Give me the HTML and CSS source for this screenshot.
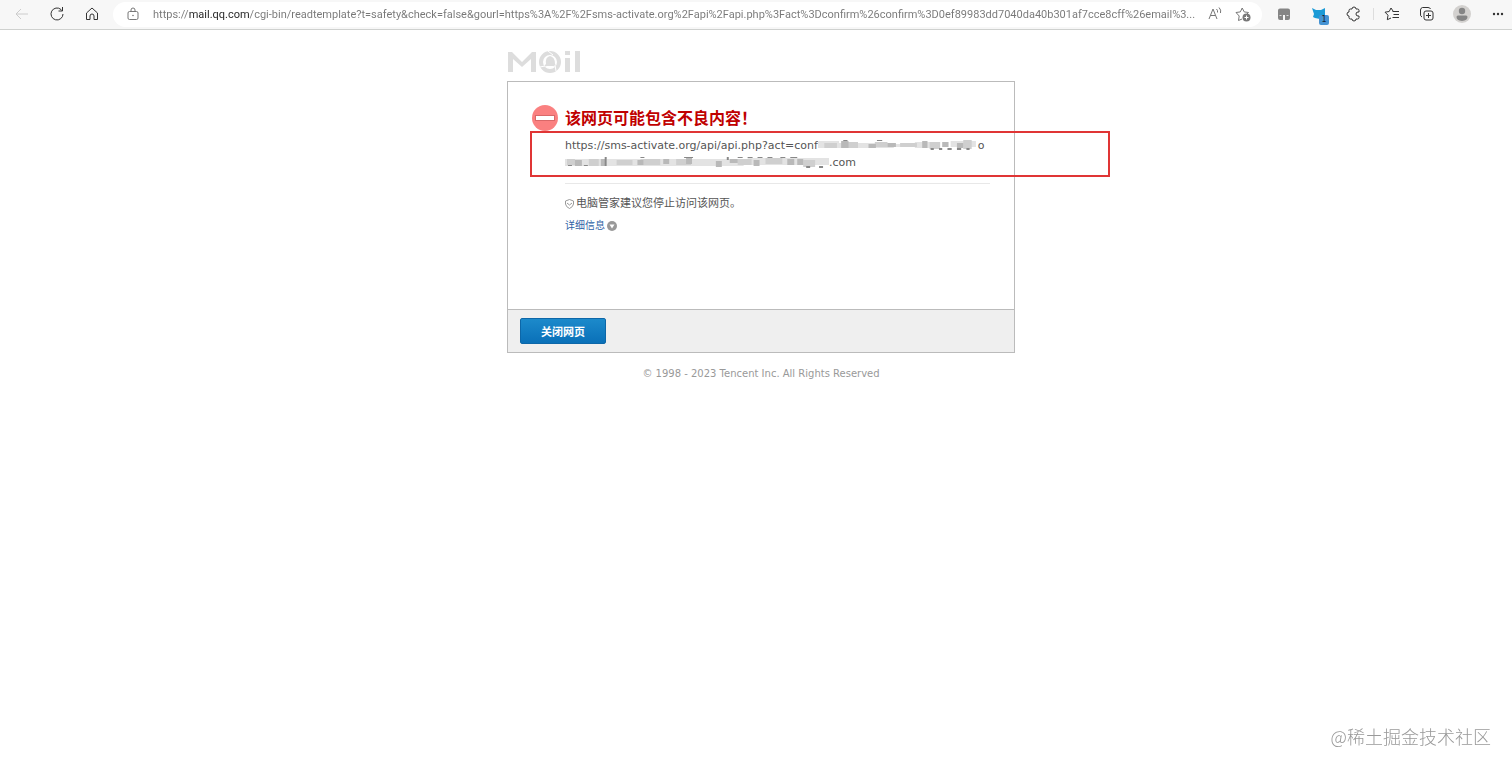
FILE: index.html
```html
<!DOCTYPE html>
<html lang="zh-CN">
<head>
    <meta charset="utf-8">
    <meta name="viewport" content="width=device-width, initial-scale=1.0">
    <title>QQ Mail</title>
    <link rel="stylesheet" href="styles.css">
</head>
<body>

    <header class="toolbar">
        <button class="tool back" aria-label="Back">
            <svg width="16" height="16" viewBox="0 0 16 16"><path d="M14 8H2M7 3L2 8l5 5"/></svg>
        </button>
        <button class="tool" aria-label="Refresh">
            <svg width="16" height="16" viewBox="0 0 16 16"><path d="M14 8a6 6 0 1 1-2-4.500L13.500 5M13.500 1v4h-4"/></svg>
        </button>
        <button class="tool" aria-label="Home">
            <svg width="16" height="16" viewBox="0 0 16 16"><path d="M2.500 7L8 2l5.500 5v6.500h-3.500V10a2 2 0 0 0-4 0v3.500H2.500z"/></svg>
        </button>

        <div class="address">
            <button class="addr-btn lock" aria-label="Site information">
                <svg width="14" height="14" viewBox="0 0 14 14"><rect x="2" y="4.500" width="10" height="8" rx="1.500"/><path d="M5 4.500V3a2 2 0 0 1 4 0v1.500"/><circle class="solid" cx="7" cy="8.500" r=".8"/></svg>
            </button>
            <input class="url" type="text" aria-label="Address" value="https://mail.qq.com/cgi-bin/readtemplate?t=safety&amp;check=false&amp;gourl=https%3A%2F%2Fsms-activate.org%2Fapi%2Fapi.php%3Fact%3Dconfirm%26confirm%3D0ef89983dd7040da40b301af7cce8cff%26email%3...">
            <button class="addr-btn" aria-label="Read aloud">
                <svg width="16" height="16" viewBox="0 0 16 16"><path d="M2 13L6 3l4 10M3.500 9.500h5M9.500 3q1.500 1.500 1 3.500M12 1.500q2.500 2.500 1.500 5.500"/></svg>
            </button>
            <button class="addr-btn" aria-label="Add to favorites">
                <svg width="16" height="16" viewBox="0 0 16 16"><path d="M7 13l-3.500 1.500.7-4.500L1 6.500l4.300-.6L7.200 2l2 3.900 4.300.6-1.500 1.500"/><circle class="solid" cx="11.500" cy="11.500" r="4"/><path class="white" d="M11.500 9.500v4M9.500 11.500h4"/></svg>
            </button>
        </div>

        <div class="extensions">
            <button class="tool" aria-label="Tampermonkey">
                <svg width="14" height="14" viewBox="0 0 14 14"><path class="fill-gray" d="M3 1.500h8q2 0 2 2V8H1V3.500q0-2 2-2zM1 8h5v5H3q-2 0-2-2zM8 8h5v3q0 2-2 2H8z"/><path class="pale" d="M2.500 8.500h2M9.500 8.500h2"/></svg>
            </button>
            <button class="tool blue-ext" aria-label="Extension, 1 item">
                <svg width="14" height="14" viewBox="0 0 14 14"><path class="fill-blue" d="M0 1l4 2h5l4-2v8l-2 1-3 2-5-1-2-1 1-3z"/></svg>
                <span class="badge">1</span>
            </button>
            <button class="tool" aria-label="Extensions">
                <svg width="16" height="16" viewBox="0 0 16 16"><path d="M4.500 3H6a2 2 0 0 1 4 0h1.500q1.500 0 1.500 1.500V6h-1a2 2 0 0 0 0 4h1v1.500q0 1.500-1.500 1.500H10a2 2 0 0 1-4 0H4.500Q3 13 3 11.500V10a2 2 0 0 1 0-4V4.500Q3 3 4.500 3z"/></svg>
            </button>
        </div>
        <div class="browser-menu">
            <button class="tool" aria-label="Favorites">
                <svg width="16" height="16" viewBox="0 0 16 16"><path d="M9 5L7 2 5.200 5.500 1 6.200l3 3-.7 4.500L7 12M8.500 5.500H15M9.500 8.500H15M8.500 11.500H15"/></svg>
            </button>
            <button class="tool" aria-label="Collections">
                <svg width="16" height="16" viewBox="0 0 16 16"><rect x="5" y="5" width="9" height="9" rx="2"/><path d="M9.500 7v5M7 9.500h5M3 11Q1 10 1.500 8V4q0-2 2-2.500H9q2 0 2.500 1.500"/></svg>
            </button>
            <button class="tool" aria-label="Profile">
                <svg width="18" height="18" viewBox="0 0 18 18"><circle class="avatar-bg" cx="9" cy="9" r="9"/><circle class="fill-gray" cx="9" cy="6" r="3.200"/><path class="fill-gray" d="M3.500 12q0-1.500 1.500-1.500h8q1.500 0 1.500 1.500 0 3.500-5.500 4-5.500-.5-5.500-4z"/></svg>
            </button>
            <button class="tool more" aria-label="Settings and more">
                <svg width="14" height="14" viewBox="0 0 14 14"><circle class="dot" cx="3" cy="7" r="1.200"/><circle class="dot" cx="7" cy="7" r="1.200"/><circle class="dot" cx="11" cy="7" r="1.200"/></svg>
            </button>
        </div>
    </header>

    <main class="page">
        <svg class="logo" width="74" height="24" viewBox="0 0 74 24" role="img" aria-label="Mail">
            <path class="logo-fill" d="M1 22V2h4l10 10L25 2h4v20h-5V9l-9 8-9-8v13z"/>
            <circle class="logo-ring" cx="43" cy="12" r="9"/>
            <path class="logo-fill" d="M39 14q-1-7 4-8 5 1 5 8l2 3-4-1h-6l-4 1z"/>
            <path class="logo-cut" d="M33 17l5-1M41 1l5 4M48 15l1 6"/>
            <path class="logo-fill" d="M58 8h5v14h-5zM58 1h5v4h-5zM68 1h5v21h-5z"/>
        </svg>

        <section class="card">
            <div class="content">
                <svg class="stop" width="26" height="26" viewBox="0 0 26 26"><circle class="stop-bg" cx="13" cy="13" r="13"/><rect class="stop-bar" x="3.500" y="10.500" width="19" height="5"/></svg>
                <div class="detail">
                    <h1>该网页可能包含不良内容！</h1>
                    <div class="target">
                        <p>https://sms-activate.org/api/api.php?act=conf<svg class="mosaic" width="160" height="12" viewBox="0 0 152 12" preserveAspectRatio="none">
                            <path class="m1" d="M0 2h20v7H0zM20 4h52v5H20zM72 5h20v3H72zM92 3h24v6H92zM126 2h24v6h-24z"/>
                            <path class="m2" d="M6 4h12v5H6zM28 3h10v6H28zM54 3h12v5H54zM78 4h16v4H78zM106 3h10v7h-10zM138 1h8v9h-8z"/>
                            <path class="m3" d="M22 2h7v7h-7zM48 5h7v4h-7zM66 4h8v4h-8zM99 2h5v7h-5zM118 3h6v5h-6zM132 4h6v5h-6z"/>
                            <path class="m4" d="M24 1h4v1h-4zM56 1h5v1h-5zM107 9h3v2h-3zM115 9h3v2h-3zM123 9h4v2h-4zM132 9h4v2h-4zM141 9h3v2h-3z"/>
                        </svg>o</p>
                        <p><svg class="mosaic" width="264" height="12" viewBox="0 0 266 12" preserveAspectRatio="none">
                            <path class="m1" d="M0 3h36v7H0zM42 3h104v7H42zM146 3h34v7h-34zM184 2h82v7h-82z"/>
                            <path class="m2" d="M2 3h8v6H2zM24 3h10v7H24zM52 4h16v5H52zM76 3h20v6H76zM112 3h15v6h-15zM174 3h14v6h-14zM202 2h17v6h-17zM240 4h12v7h-12z"/>
                            <path class="m3" d="M10 4h7v6h-7zM36 3h5v7h-5zM73 4h6v5h-6zM99 3h6v5h-6zM122 2h6v6h-6zM152 5h6v6h-6zM166 3h8v4h-8zM190 4h6v6h-6zM224 3h7v6h-7zM234 3h6v6h-6z"/>
                            <path class="m4" d="M3 9h4v1H3zM19 9h4v1h-4zM40 1h2v9h-2zM76 1h4v1h-4zM120 1h9v1h-9zM163 1h2v3h-2zM174 1h5v1h-5zM184 1h5v1h-5zM194 1h5v1h-5zM204 1h5v1h-5zM217 1h5v1h-5zM227 1h7v1h-7zM243 10h4v2h-4zM256 10h4v2h-4z"/>
                        </svg>.com</p>
                        <div class="highlight"></div>
                    </div>
                    <p class="advice">
                        <svg width="9" height="10" viewBox="0 0 9 10"><path d="M.5 2l4-1.500 4 1.500v3q-.5 3-4 4.500Q1 8 .5 5zM2 4l2.500 2L7 4"/></svg>
                        <span>电脑管家建议您停止访问该网页。</span>
                    </p>
                    <a class="info" href="#">详细信息
                        <svg width="10" height="10" viewBox="0 0 10 10"><circle class="info-bg" cx="5" cy="5" r="5"/><path class="info-arrow" d="M2.500 3.500h5L5 7.500z"/></svg>
                    </a>
                </div>
            </div>
            <div class="actions">
                <button class="close">关闭网页</button>
            </div>
        </section>

        <footer>© 1998 - 2023 Tencent Inc. All Rights Reserved</footer>
    </main>

    <div class="watermark">@稀土掘金技术社区</div>

</body>
</html>
```
FILE: styles.css
```css
* {
    box-sizing: border-box;
}

body {
    margin: 0;
    background: #fff;
    color: #555;
    font-family: "DejaVu Sans", "Noto Sans CJK SC", sans-serif;
    font-size: 11px;
}

h1, p {
    margin: 0;
}

button {
    padding: 0;
    border: 0;
    background: none;
    font-family: inherit;
    cursor: pointer;
}

svg {
    fill: none;
    stroke: currentColor;
}

/* browser bar */
.toolbar {
    display: flex;
    align-items: center;
    height: 30px;
    padding: 0 1px 1px 4px;
    background: #f7f7f7;
    border-bottom: 1px solid #cfd1cf;
    color: #333;
}

.tool {
    display: flex;
    align-items: center;
    justify-content: center;
    width: 35px;
    height: 28px;
    color: #333;
}

.back {
    color: #ccc;
}

.address {
    display: flex;
    flex: 1;
    align-items: center;
    min-width: 0;
    height: 25px;
    margin: 0 4px;
    padding: 0 5px 0 12px;
    background: #fff;
    border-radius: 13px;
}

.addr-btn {
    display: flex;
    align-items: center;
    justify-content: center;
    width: 28px;
    height: 24px;
    color: #777;
}

.addr-btn.lock {
    width: 16px;
    margin-right: 12px;
}

/* the host part of the address is darker than the rest */
.url {
    flex: 1;
    min-width: 0;
    height: 24px;
    padding: 0;
    border: 0;
    outline: 0;
    background: linear-gradient(to right, #777 36px, #222 36px, #222 96px, #777 96px);
    -webkit-background-clip: text;
    background-clip: text;
    color: transparent;
    font-family: Roboto, sans-serif;
    font-size: 11px;
}

.solid {
    fill: currentColor;
    stroke: none;
}

.white {
    stroke: #fff;
}

.fill-gray {
    fill: #858585;
    stroke: none;
}

.pale {
    stroke: #ddd;
}

.fill-blue {
    fill: #1b9ad6;
    stroke: none;
}

.avatar-bg {
    fill: #d3d1cf;
    stroke: none;
}

.dot {
    fill: #333;
    stroke: none;
}

.extensions, .browser-menu {
    display: flex;
}

.browser-menu {
    margin-left: 2px;
    border-left: 1px solid transparent;
    border-image: linear-gradient(transparent 8px, #ddd 8px, #ddd 20px, transparent 20px) 1;
}

.more {
    width: 32px;
    padding-left: 5px;
}

.blue-ext {
    position: relative;
}

.badge {
    position: absolute;
    right: 7px;
    bottom: 3px;
    width: 10px;
    height: 10px;
    border-radius: 2px;
    background: #4593d3;
    color: #123;
    font-size: 8px;
    line-height: 10px;
}

/* warning page */
.page {
    width: 518px;
    max-width: 100%;
    margin: 0 auto;
    padding: 20px 0 0 10px;
}

.logo {
    display: block;
    margin-bottom: 7px;
}

.logo-fill {
    fill: #ddd;
    stroke: none;
}

.logo-ring {
    stroke: #ddd;
    stroke-width: 4;
}

.logo-cut {
    stroke: #fff;
}

.card {
    border: 1px solid #bbb;
}

.content {
    display: flex;
    gap: 7px;
    min-height: 227px;
    padding: 23px 24px 0;
}

.stop {
    flex: none;
}

.stop-bg {
    fill: #fa8080;
    stroke: none;
}

.stop-bar {
    fill: #fff;
    stroke: #d96868;
}

.detail {
    flex: 1;
    min-width: 0;
}

h1 {
    margin-bottom: 4px;
    color: #c00000;
    font-size: 16px;
    line-height: 28px;
}

.target {
    position: relative;
    padding-bottom: 12px;
    border-bottom: 1px solid #e8e8e8;
    line-height: 17px;
    white-space: nowrap;
}

.mosaic {
    vertical-align: -2px;
    stroke: none;
}

.m1 { fill: #e3e3e3; }
.m2 { fill: #cfcfcf; }
.m3 { fill: #b9b9b9; }
.m4 { fill: #888; }

.highlight {
    position: absolute;
    top: -6px;
    left: -35px;
    width: 580px;
    height: 46px;
    border: 2px solid #e03535;
}

.advice {
    display: flex;
    align-items: center;
    gap: 2px;
    margin-top: 11px;
    line-height: 18px;
}

.advice svg {
    color: #999;
}

.info {
    display: inline-flex;
    align-items: center;
    gap: 2px;
    margin-top: 5px;
    color: #2e62a5;
    font-size: 10px;
    line-height: 16px;
    text-decoration: none;
}

.info-bg {
    fill: #999;
    stroke: none;
}

.info-arrow {
    fill: #fff;
    stroke: none;
}

.actions {
    padding: 8px 12px;
    background: #efefef;
    border-top: 1px solid #bbb;
}

.close {
    display: block;
    width: 86px;
    height: 26px;
    border: 1px solid #0d67a8;
    border-radius: 2px;
    background: linear-gradient(#1c8acb, #0a70b8);
    color: #fff;
    font-size: 11px;
    font-weight: bold;
}

footer {
    margin-top: 13px;
    color: #999;
    font-size: 10px;
    line-height: 16px;
    text-align: center;
}

.watermark {
    position: fixed;
    right: 21px;
    bottom: 20px;
    color: #999;
    font-family: "Noto Sans CJK SC", sans-serif;
    font-size: 18px;
    font-weight: 300;
    line-height: 26px;
}
```
